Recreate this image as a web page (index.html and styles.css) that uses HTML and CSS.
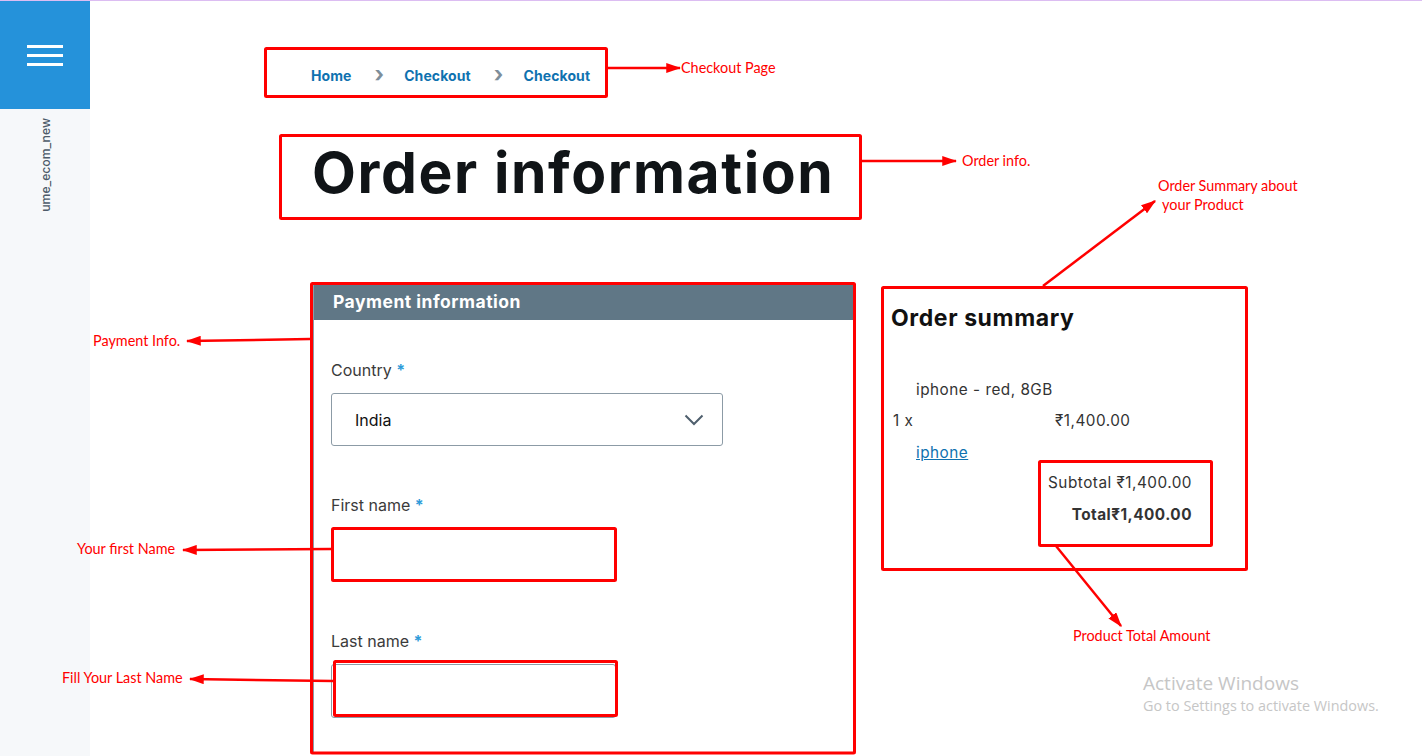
FILE: index.html
```html
<!DOCTYPE html>
<html lang="en">
<head>
    <meta charset="UTF-8">
    <title>Order information</title>
    <meta name="viewport" content="width=device-width, initial-scale=1.0">
    <link rel="stylesheet" href="styles.css">
</head>
<body>
    <div class="top-line"></div>
    <div class="app">
        <aside class="sidebar">
            <div class="menu-block">
                <span class="bar"></span>
                <span class="bar"></span>
                <span class="bar"></span>
            </div>
            <div class="shop-name">ume_ecom_new</div>
        </aside>

        <main class="content">
            <nav class="breadcrumb">
                <a href="#">Home</a>
                <span class="crumb-sep">&#x203A;</span>
                <a href="#">Checkout</a>
                <span class="crumb-sep">&#x203A;</span>
                <a href="#">Checkout</a>
            </nav>

            <h1 class="page-title">Order information</h1>

            <div class="columns">
                <section class="card">
                    <div class="card-header">Payment information</div>
                    <div class="card-body">
                        <label class="field-label">Country <span class="req">*</span></label>
                        <div class="select">
                            <span>India</span>
                            <svg width="20" height="12" viewBox="0 0 20 12"><path d="M1.5 1.5 L10 10 L18.5 1.5" fill="none" stroke="#4f5f6d" stroke-width="2"/></svg>
                        </div>

                        <label class="field-label gap">First name <span class="req">*</span></label>
                        <input class="text-input" type="text">

                        <label class="field-label gap">Last name <span class="req">*</span></label>
                        <input class="text-input" type="text">
                    </div>
                </section>

                <section class="summary">
                    <h2>Order summary</h2>
                    <div class="item-name">iphone - red, 8GB</div>
                    <div class="item-row">
                        <span>1 x</span>
                        <span>&#8377;1,400.00</span>
                    </div>
                    <a class="item-link" href="#">iphone</a>
                    <div class="totals">
                        <div>Subtotal &#8377;1,400.00</div>
                        <div class="grand">Total&#8377;1,400.00</div>
                    </div>
                </section>
            </div>
        </main>
    </div>

    <!-- annotation layer drawn over the screenshot -->
    <svg class="notes" width="1422" height="756" viewBox="0 0 1422 756">
        <defs>
            <marker id="head" markerWidth="6" markerHeight="4" refX="5.5" refY="2" orient="auto" markerUnits="strokeWidth">
                <path d="M0 0 L6 2 L0 4 Z" fill="#ff0000"/>
            </marker>
        </defs>
        <g fill="none" stroke="#ff0000" stroke-width="3">
            <rect x="265.5" y="48.5" width="341" height="48" rx="1"/>
            <rect x="280.5" y="135.5" width="580" height="83" rx="1"/>
            <rect x="311.5" y="283.5" width="543" height="469.5" rx="1"/>
            <rect x="332.5" y="528.5" width="283" height="52" rx="1"/>
            <rect x="334.5" y="661.5" width="282" height="54" rx="1"/>
            <rect x="882.5" y="287.5" width="364" height="282" rx="1"/>
            <rect x="1039.5" y="461.5" width="172" height="84" rx="1"/>
        </g>
        <g stroke="#ff0000" stroke-width="2.5" marker-end="url(#head)">
            <line x1="607" y1="68" x2="680" y2="68"/>
            <line x1="861" y1="161" x2="956" y2="161"/>
            <line x1="310" y1="339" x2="187" y2="341"/>
            <line x1="331" y1="549" x2="183" y2="550"/>
            <line x1="333" y1="681" x2="190" y2="679"/>
            <line x1="1043" y1="286" x2="1155" y2="201"/>
            <line x1="1056" y1="546" x2="1121" y2="626"/>
        </g>
        <g class="note-text" fill="#ff0000">
            <text x="681" y="73">Checkout Page</text>
            <text x="962" y="166">Order info.</text>
            <text x="1158" y="191">Order Summary about</text>
            <text x="1162" y="210">your Product</text>
            <text x="93" y="346">Payment Info.</text>
            <text x="77" y="554">Your first Name</text>
            <text x="62" y="683">Fill Your Last Name</text>
            <text x="1073" y="641">Product Total Amount</text>
        </g>
    </svg>

    <div class="activate">
        <div class="activate-title">Activate Windows</div>
        <div class="activate-sub">Go to Settings to activate Windows.</div>
    </div>
</body>
</html>
```

FILE: styles.css
```css
:root {
    --sidebar-blue: #2592da;
    --link-color: #0f72b0;
    --header-gray: #607786;
    --border-gray: #8c9ba6;
    --text-color: #333;
}

body {
    margin: 0;
    font-family: Inter, 'Noto Sans', sans-serif;
    color: var(--text-color);
    background: #fff;
    overflow: hidden;
}

.top-line {
    height: 1px;
    background: #dcbdf2;
}

.app {
    display: flex;
    height: 755px;
}

.sidebar {
    width: 90px;
    flex-shrink: 0;
    background: #f6f8fa;
    display: flex;
    flex-direction: column;
    align-items: center;
}

.menu-block {
    width: 90px;
    height: 108px;
    background: var(--sidebar-blue);
    display: flex;
    flex-direction: column;
    align-items: center;
    justify-content: center;
    gap: 6px;
}

.menu-block .bar {
    width: 36px;
    height: 3px;
    background: #fff;
}

.shop-name {
    margin-top: 9px;
    writing-mode: vertical-rl;
    transform: rotate(180deg);
    font-size: 12.2px;
    font-weight: 500;
    color: #4d5b69;
}

.content {
    flex: 1;
    padding: 64px 0 0 221px;
}

.breadcrumb {
    display: flex;
    align-items: center;
    height: 20px;
    font-size: 14px;
    font-weight: 700;
    letter-spacing: 0.1px;
}

.breadcrumb a {
    color: var(--link-color);
    text-decoration: none;
}

.crumb-sep {
    color: #7e8e9a;
    font-size: 22px;
    font-weight: 700;
    margin: -3px 20px 0 23px;
}

.page-title {
    margin: 56px 0 0 1px;
    font-size: 57px;
    line-height: 64px;
    font-weight: 700;
    color: #101417;
    letter-spacing: 1.6px;
}

.columns {
    display: flex;
    align-items: flex-start;
    margin-top: 79px;
    margin-left: 2px;
}

.card {
    width: 539px;
    border: 1px solid var(--border-gray);
    border-top: none;
}

.card-header {
    height: 36px;
    line-height: 36px;
    padding-left: 19px;
    background: var(--header-gray);
    color: #fff;
    font-size: 17.5px;
    font-weight: 700;
    letter-spacing: 0.5px;
}

.card-body {
    display: flex;
    flex-direction: column;
    align-items: flex-start;
    padding: 38px 17px 35px;
}

.field-label {
    font-size: 16px;
    line-height: 24px;
    color: #3b3b3b;
    margin-bottom: 11px;
}

.field-label.gap {
    margin-top: 47px;
}

.req {
    color: #2d9bd9;
    font-weight: 700;
}

.select {
    box-sizing: border-box;
    width: 392px;
    height: 53px;
    border: 1px solid var(--border-gray);
    border-radius: 3px;
    display: flex;
    align-items: center;
    justify-content: space-between;
    padding: 0 18px 0 23px;
    font-size: 16px;
    color: #111;
}

.text-input {
    box-sizing: border-box;
    width: 285px;
    height: 54px;
    border: 1px solid var(--border-gray);
    border-radius: 3px;
    margin: 0;
}

.summary {
    margin-left: 37px;
    padding-top: 20px;
    width: 301px;
    font-size: 15.3px;
    line-height: 22px;
    letter-spacing: 0.5px;
}

.summary h2 {
    margin: 0;
    font-size: 23px;
    line-height: 28px;
    font-weight: 700;
    color: #111;
    letter-spacing: 0.6px;
}

.item-name {
    margin: 47px 0 0 25px;
}

.item-row {
    display: grid;
    grid-template-columns: 162px auto;
    margin: 9px 0 0 2px;
}

.item-link {
    display: inline-block;
    margin: 10px 0 0 25px;
    color: var(--link-color);
}

.totals {
    text-align: right;
    margin-top: 8px;
}

.totals .grand {
    margin-top: 10px;
    font-weight: 700;
}

.notes {
    position: absolute;
    top: 0;
    left: 0;
    pointer-events: none;
}

.note-text {
    font-family: Lato, 'Liberation Sans', sans-serif;
    font-size: 14.4px;
}

.activate {
    position: absolute;
    left: 1143px;
    top: 671px;
    font-family: 'Open Sans', 'Noto Sans', sans-serif;
    color: #c6c6c6;
}

.activate-title {
    font-size: 19px;
    line-height: 25px;
}

.activate-sub {
    font-size: 14.4px;
    line-height: 20px;
}
```
